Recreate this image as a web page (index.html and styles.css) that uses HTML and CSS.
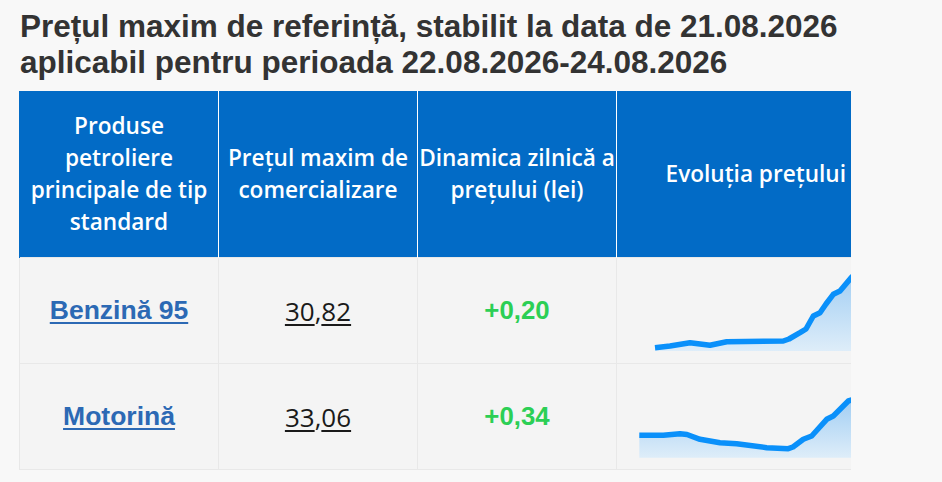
FILE: index.html
```html
<!DOCTYPE html>
<html lang="ro">
<head>
<meta charset="utf-8">
<link rel="stylesheet" href="styles.css">
</head>
<body>
<div class="page">
  <h2 class="title">Prețul maxim de referință, stabilit la data de 21.08.2026 aplicabil pentru perioada 22.08.2026-24.08.2026</h2>
  <div class="table-wrap">
    <table class="prices">
      <colgroup>
        <col class="c1"><col class="c2"><col class="c3"><col class="c4">
      </colgroup>
      <thead>
        <tr>
          <th>Produse petroliere principale de tip standard</th>
          <th>Prețul maxim de comercializare</th>
          <th>Dinamica zilnică a prețului (lei)</th>
          <th>Evoluția prețului</th>
        </tr>
      </thead>
      <tbody>
        <tr>
          <td><a class="product" href="#">Benzină 95</a></td>
          <td class="price"><span class="u">30</span>,<span class="u">82</span></td>
          <td class="delta">+0,20</td>
          <td class="chart">
            <svg width="276" height="105" viewBox="0 0 276 105">
              <defs>
                <linearGradient id="g1" x1="0" y1="0" x2="0" y2="1">
                  <stop offset="0" stop-color="#9fcdf3"/>
                  <stop offset="1" stop-color="#deedf9"/>
                </linearGradient>
              </defs>
              <path d="M38 89.7 L53 88 L73 84.7 L93 87.3 L109.7 83.7 L166.3 83 L172 81 L183 74.7 L189 71 L196.3 58 L203 54.7 L209 46 L216.3 36.3 L223 33 L234.7 19 L242 13 L242 93 L38 93 Z" fill="url(#g1)"/>
              <polyline points="38,89.7 53,88 73,84.7 93,87.3 109.7,83.7 166.3,83 172,81 183,74.7 189,71 196.3,58 203,54.7 209,46 216.3,36.3 223,33 234.7,19 242,13" fill="none" stroke="#0a90fa" stroke-width="5.5" stroke-linejoin="round"/>
            </svg>
          </td>
        </tr>
        <tr>
          <td><a class="product" href="#">Motorină</a></td>
          <td class="price"><span class="u">33</span>,<span class="u">06</span></td>
          <td class="delta">+0,34</td>
          <td class="chart">
            <svg width="276" height="105" viewBox="0 0 276 105">
              <defs>
                <linearGradient id="g2" x1="0" y1="0" x2="0" y2="1">
                  <stop offset="0" stop-color="#9fcdf3"/>
                  <stop offset="1" stop-color="#deedf9"/>
                </linearGradient>
              </defs>
              <path d="M22.3 71.3 L46.3 71.3 L63 69.7 L70 70.5 L83 75.3 L103 78.7 L119.7 79.7 L149.7 83.7 L171.3 84.7 L176 83 L186.3 75.3 L194.7 72 L201 65 L209.7 55.3 L216.3 52 L231.3 37 L234.7 36 L242 34 L242 93.7 L22.3 93.7 Z" fill="url(#g2)"/>
              <polyline points="22.3,71.3 46.3,71.3 63,69.7 70,70.5 83,75.3 103,78.7 119.7,79.7 149.7,83.7 171.3,84.7 176,83 186.3,75.3 194.7,72 201,65 209.7,55.3 216.3,52 231.3,37 234.7,36 242,34" fill="none" stroke="#0a90fa" stroke-width="5.5" stroke-linejoin="round"/>
            </svg>
          </td>
        </tr>
      </tbody>
    </table>
  </div>
</div>
</body>
</html>
```

FILE: styles.css
```css
html, body {
  margin: 0;
  padding: 0;
  background: #f8f8f8;
}

.page {
  padding: 0 19px;
}

.title {
  margin: 0;
  padding: 8px 0 0 1px;
  width: 830px;
  font-family: "Liberation Sans", Arial, sans-serif;
  font-weight: 700;
  font-size: 31.5px;
  line-height: 36px;
  color: #333333;
}

.table-wrap {
  margin-top: 11px;
  width: 832px;
  overflow: hidden;
}

.prices {
  border-collapse: collapse;
  table-layout: fixed;
  width: 875px;
}

.c1, .c2, .c3 { width: 199px; }
.c4 { width: 278px; }

.prices th {
  background: #026bc6;
  color: #ffffff;
  font-family: "Open Sans", sans-serif;
  font-weight: 600;
  font-size: 22.6px;
  line-height: 32px;
  padding: 19px 1px;
  text-align: center;
  vertical-align: middle;
  border-left: 1px solid #ffffff;
}

.prices th:first-child {
  border-left: 1px solid #026bc6;
}

.prices td {
  background: #f4f4f4;
  border: 1px solid #e8e8e8;
  height: 105px;
  padding: 0;
  text-align: center;
  vertical-align: middle;
}

.product {
  font-family: "Liberation Sans", Arial, sans-serif;
  font-weight: 700;
  font-size: 26.5px;
  color: #2c69b4;
  text-decoration: underline;
  text-decoration-thickness: 2px;
  text-underline-offset: 3px;
}

.price {
  font-family: "Open Sans", sans-serif;
  font-size: 26px;
  color: #1a1a1a;
}

.u {
  text-decoration: underline;
  text-decoration-thickness: 2px;
  text-underline-offset: 3px;
}

.delta {
  font-family: "Liberation Sans", Arial, sans-serif;
  font-weight: 700;
  font-size: 25.8px;
  color: #2ccf55;
}

.prices td.chart {
  padding: 0;
  vertical-align: top;
  text-align: left;
}

.chart svg {
  display: block;
}
```
